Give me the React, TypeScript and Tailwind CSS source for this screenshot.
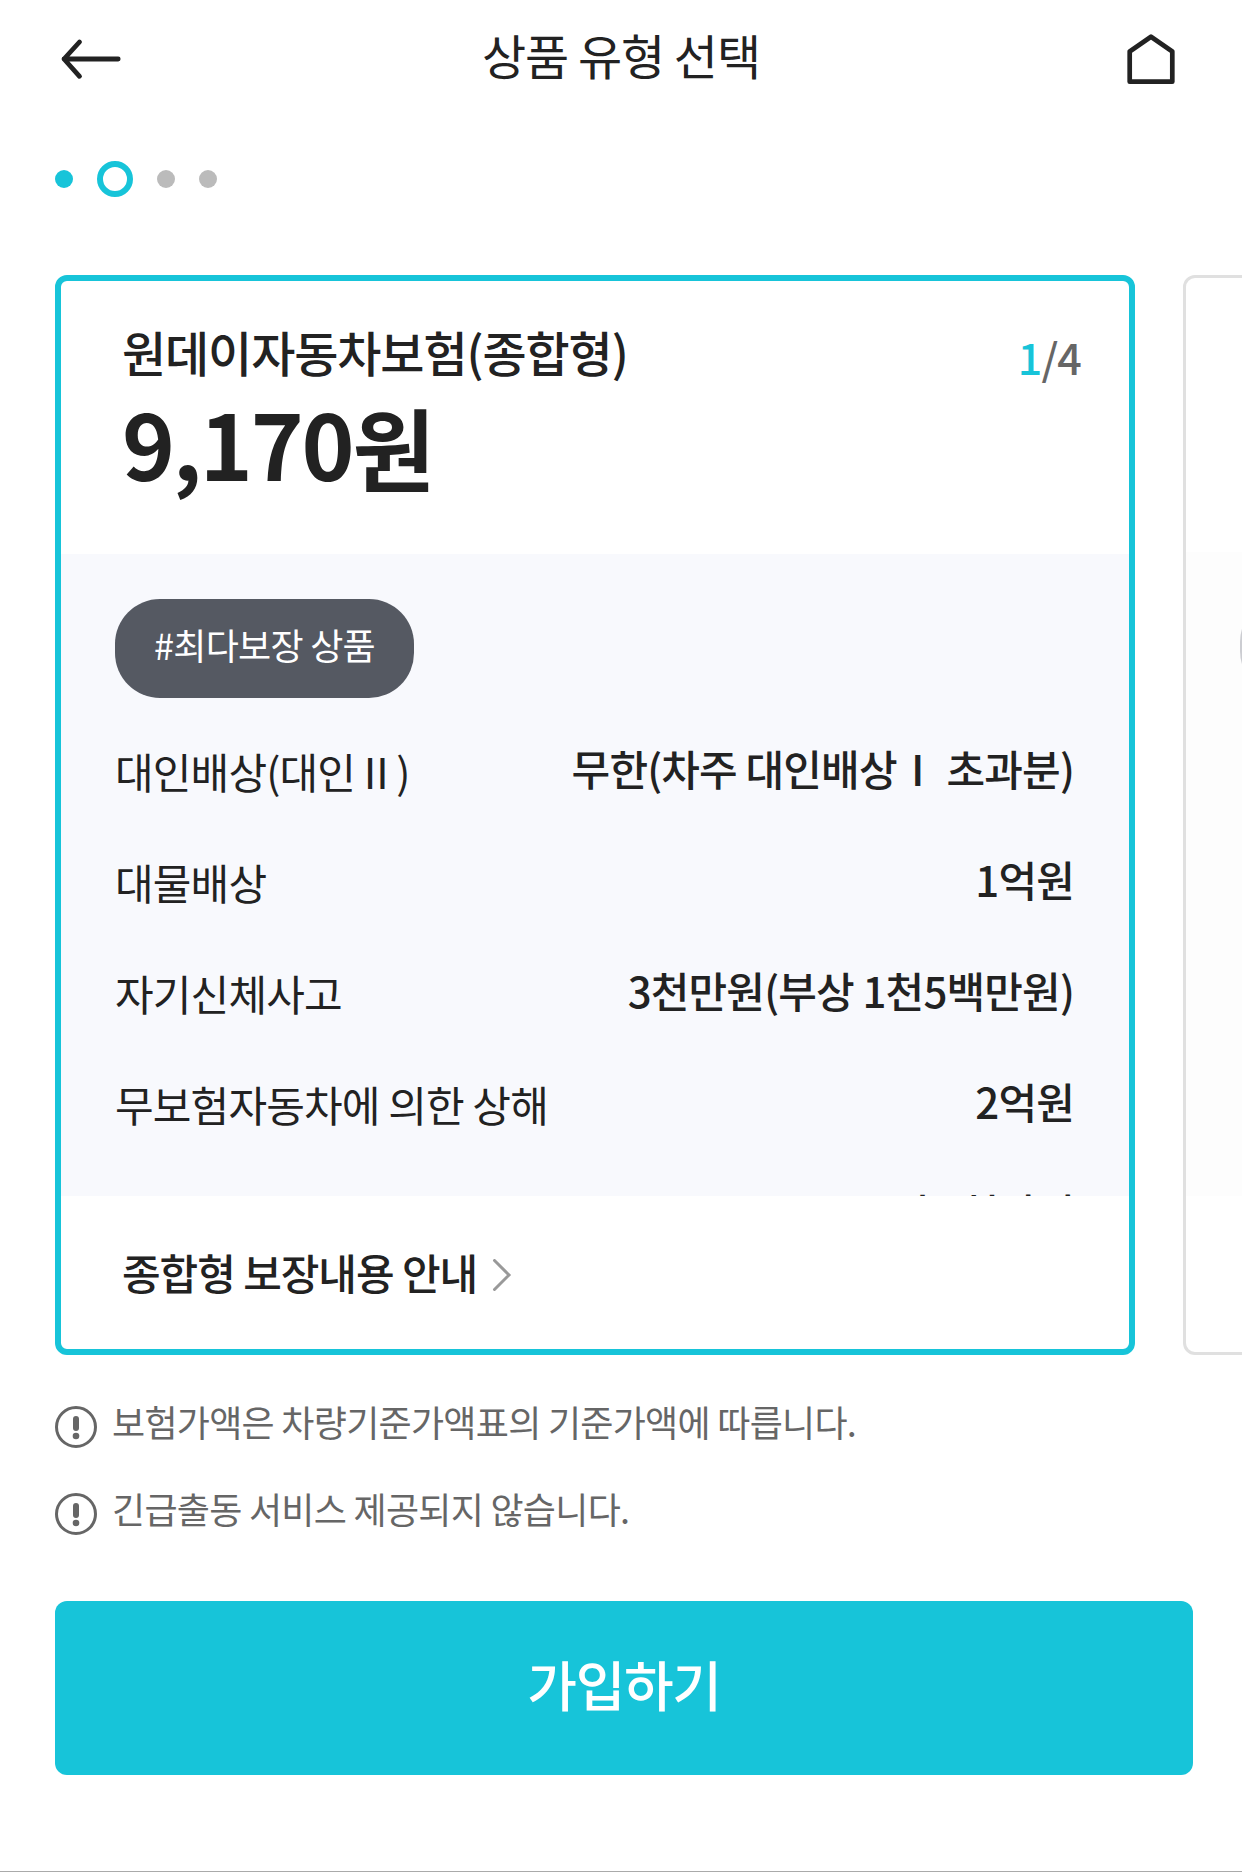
const coverages = [
  { label: "대인배상(대인Ⅱ)", value: "무한(차주 대인배상Ⅰ 초과분)" },
  { label: "대물배상", value: "1억원" },
  { label: "자기신체사고", value: "3천만원(부상 1천5백만원)" },
  { label: "무보험자동차에 의한 상해", value: "2억원" },
  { label: "", value: "1억 5천만원" },
];

const notices = ["보험가액은 차량기준가액표의 기준가액에 따릅니다.", "긴급출동 서비스 제공되지 않습니다."];

function NoticeIcon() {
  return (
    <svg className="mt-[7px] h-[42px] w-[42px] shrink-0" viewBox="0 0 42 42" fill="none">
      <circle cx="21" cy="21" r="19.5" stroke="#666" strokeWidth="3" />
      <path d="M21 13v9" stroke="#666" strokeWidth="6" strokeLinecap="round" />
      <circle cx="21" cy="30" r="3.3" fill="#666" />
    </svg>
  );
}

export default function App() {
  return (
    <div className="flex h-[1872px] w-[1242px] flex-col overflow-hidden border-b border-[#aaa] bg-white font-['Noto_Sans_CJK_KR',sans-serif] tracking-[-0.025em] text-[#222]">
      <header className="flex h-[118px] shrink-0 items-center justify-between px-[60px]">
        <svg
          className="h-[42px] w-[62px]"
          viewBox="0 0 62 42"
          fill="none"
          stroke="#222"
          strokeWidth="4.8"
          strokeLinecap="round"
          strokeLinejoin="round"
        >
          <path d="M19.5 4 4 21l15.500 17.300M4 21h54.200" />
        </svg>
        <h1 className="mb-[10px] text-[48px] leading-none tracking-[-1.05px]">상품 유형 선택</h1>
        <svg
          className="h-[52px] w-[62px]"
          viewBox="-7 0 62 52"
          fill="none"
          stroke="#222"
          strokeWidth="4.7"
          strokeLinejoin="round"
        >
          <path d="M2.700 48.700V18.500L24 3.700l21.300 14.800v30.200z" />
        </svg>
      </header>

      <div className="flex h-[122px] shrink-0 items-center gap-6 pl-[55px]">
        <span className="h-[18px] w-[18px] rounded-full bg-[#17c4d9]" />
        <span className="h-9 w-9 rounded-full border-[6px] border-[#17c4d9]" />
        <span className="h-[18px] w-[18px] rounded-full bg-[#bbb]" />
        <span className="h-[18px] w-[18px] rounded-full bg-[#bbb]" />
      </div>

      <div className="mt-[35px] flex shrink-0 gap-12 pl-[55px]">
        <section className="flex h-[1080px] w-[1080px] shrink-0 flex-col overflow-hidden rounded-xl border-[6px] border-[#17c4d9]">
          <div className="flex h-[273px] shrink-0 justify-between pt-[35px] pr-[48px] pl-[61px]">
            <div>
              <h2 className="text-[48px] leading-[70px] font-medium tracking-[-1.1px]">원데이자동차보험(종합형)</h2>
              <p className="text-[90px] leading-[112px] font-bold tracking-[-0.025em]">
                9,170<span className="align-[-4px]">원</span>
              </p>
            </div>
            <p className="pt-[10px] text-[43px] leading-[60px] font-medium tracking-[-0.02em] text-[#666]">
              <span className="text-[#17c4d9]">1</span>/4
            </p>
          </div>
          <div className="h-[642px] shrink-0 overflow-hidden bg-[#f8f9fd] pt-[45px] pr-[55px] pl-[54px]">
            <span className="flex h-[99px] w-[299px] items-center justify-center rounded-[45px] bg-[#555962] pb-[10px] text-[36px] tracking-[-0.02em] text-white">
              #최다보장 상품
            </span>
            <dl className="mt-[14px] text-[42px] tracking-[-0.02em]">
              {coverages.map(({ label, value }) => (
                <div key={value} className="flex h-[111px] items-center justify-between whitespace-nowrap">
                  <dt className="pt-[6px]">{label}</dt>
                  <dd className="font-medium">{value}</dd>
                </div>
              ))}
            </dl>
          </div>
          <div className="flex flex-1 items-center gap-[15px] pl-[61px]">
            <span className="mb-[2px] text-[42px] font-medium tracking-[-0.025em]">종합형 보장내용 안내</span>
            <svg
              className="mt-1 h-8 w-5"
              viewBox="0 0 20 32"
              fill="none"
              stroke="#999"
              strokeWidth="3"
              strokeLinecap="round"
            >
              <path d="m2.500 1.500 14.500 14.500L2.500 30.500" />
            </svg>
          </div>
        </section>
        <section className="h-[1080px] w-[1080px] shrink-0 rounded-xl border-[3px] border-[#e0e0e0]">
          <div className="mt-[274px] h-[644px] bg-[#fdfdfd] pt-[45px] pl-[54px]">
            <div className="h-[99px] w-[299px] rounded-[45px] bg-[#cccdd2]" />
          </div>
        </section>
      </div>

      <ul className="mt-[44px] shrink-0 pl-[55px]">
        {notices.map((notice) => (
          <li key={notice} className="flex h-[87px] gap-[15px]">
            <NoticeIcon />
            <span className="text-[36px] leading-[44px] tracking-[-0.02em] text-[#666]">{notice}</span>
          </li>
        ))}
      </ul>
      <button className="mt-[28px] ml-[55px] h-[174px] w-[1138px] shrink-0 rounded-xl bg-[#17c4d9] pb-[9px] text-[54px] font-medium tracking-[-0.025em] text-white">
        가입하기
      </button>
    </div>
  );
}
